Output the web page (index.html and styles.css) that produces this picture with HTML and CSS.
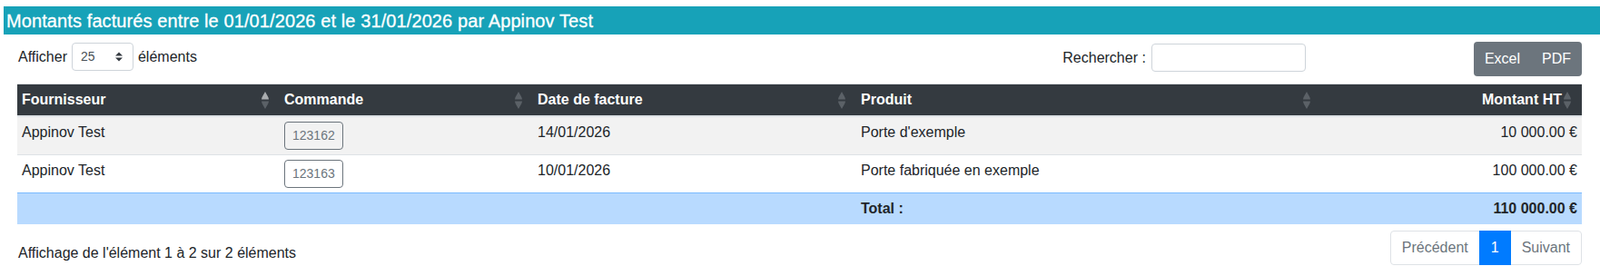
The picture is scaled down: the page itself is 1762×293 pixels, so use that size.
FILE: index.html
```html
<!DOCTYPE html>
<html lang="fr">
<head>
<meta charset="utf-8">
<title>Montants facturés</title>
<link rel="stylesheet" href="styles.css">
</head>
<body>
<h5 class="title">Montants facturés entre le 01/01/2026 et le 31/01/2026 par Appinov Test</h5>
<div class="content">
  <div class="toolbar">
    <div class="length">
      <span>Afficher</span>
      <div class="select"><span>25</span>
        <svg class="sel-arrows" width="8" height="11" viewBox="0 0 8 11"><path d="M0 4.5 L4 0.5 L8 4.5Z"/><path d="M0 6.5 L8 6.5 L4 10.5Z"/></svg>
      </div>
      <span>éléments</span>
    </div>
    <div class="search">
      <label for="q">Rechercher :</label>
      <input id="q" type="search">
    </div>
    <div class="buttons">
      <span class="btn">Excel</span>
      <span class="btn">PDF</span>
    </div>
  </div>

  <table class="grid">
    <colgroup>
      <col class="c1"><col class="c2"><col class="c3"><col class="c4"><col class="c5">
    </colgroup>
    <thead>
      <tr>
        <th><div class="th-in"><span>Fournisseur</span><svg class="sort active" width="8" height="19" viewBox="0 0 8 19"><path class="up" d="M4 0 C5.5 3 8 6 8 8.5 L0 8.5 C0 6 2.5 3 4 0Z"/><path class="down" d="M0 10.5 L8 10.5 C8 13 5.5 16 4 19 C2.5 16 0 13 0 10.5Z"/></svg></div></th>
        <th><div class="th-in"><span>Commande</span><svg class="sort" width="8" height="19" viewBox="0 0 8 19"><path class="up" d="M4 0 C5.5 3 8 6 8 8.5 L0 8.5 C0 6 2.5 3 4 0Z"/><path class="down" d="M0 10.5 L8 10.5 C8 13 5.5 16 4 19 C2.5 16 0 13 0 10.5Z"/></svg></div></th>
        <th><div class="th-in"><span>Date de facture</span><svg class="sort" width="8" height="19" viewBox="0 0 8 19"><path class="up" d="M4 0 C5.5 3 8 6 8 8.5 L0 8.5 C0 6 2.5 3 4 0Z"/><path class="down" d="M0 10.5 L8 10.5 C8 13 5.5 16 4 19 C2.5 16 0 13 0 10.5Z"/></svg></div></th>
        <th><div class="th-in"><span>Produit</span><svg class="sort" width="8" height="19" viewBox="0 0 8 19"><path class="up" d="M4 0 C5.5 3 8 6 8 8.5 L0 8.5 C0 6 2.5 3 4 0Z"/><path class="down" d="M0 10.5 L8 10.5 C8 13 5.5 16 4 19 C2.5 16 0 13 0 10.5Z"/></svg></div></th>
        <th><div class="th-in right"><span>Montant HT</span><svg class="sort" width="8" height="19" viewBox="0 0 8 19"><path class="up" d="M4 0 C5.5 3 8 6 8 8.5 L0 8.5 C0 6 2.5 3 4 0Z"/><path class="down" d="M0 10.5 L8 10.5 C8 13 5.5 16 4 19 C2.5 16 0 13 0 10.5Z"/></svg></div></th>
      </tr>
    </thead>
    <tbody>
      <tr class="odd">
        <td>Appinov Test</td>
        <td><span class="badge">123162</span></td>
        <td>14/01/2026</td>
        <td>Porte d'exemple</td>
        <td class="num">10 000.00 €</td>
      </tr>
      <tr class="even">
        <td>Appinov Test</td>
        <td><span class="badge">123163</span></td>
        <td>10/01/2026</td>
        <td>Porte fabriquée en exemple</td>
        <td class="num">100 000.00 €</td>
      </tr>
    </tbody>
    <tfoot>
      <tr class="total">
        <td></td>
        <td></td>
        <td></td>
        <td>Total :</td>
        <td class="num">110 000.00 €</td>
      </tr>
    </tfoot>
  </table>

  <div class="footer">
    <div class="info">Affichage de l'élément 1 à 2 sur 2 éléments</div>
    <div class="pagination">
      <span class="page first">Précédent</span>
      <span class="page active">1</span>
      <span class="page last">Suivant</span>
    </div>
  </div>
</div>
</body>
</html>
```

FILE: styles.css
```css
* { box-sizing: border-box; }

body {
  margin: 0;
  font-family: "Liberation Sans", Arial, sans-serif;
  font-size: 16px;
  line-height: 1.5;
  color: #212529;
  background: #fff;
}

.title {
  margin: 7px 0 0 4px;
  padding: 4px 3px 3px;
  background: #17a2b8;
  color: #fff;
  font-size: 20px;
  line-height: 24px;
  font-weight: normal;
  letter-spacing: 0.1px;
  -webkit-text-stroke: 0.3px #fff;
}

.content {
  padding: 8px 20px 0 19px;
}

.toolbar {
  display: flex;
  align-items: flex-start;
  height: 38px;
}

.length {
  display: flex;
  align-items: center;
  gap: 5px;
  margin-top: 1px;
  margin-left: 1px;
}

.select {
  width: 68px;
  height: 31px;
  display: flex;
  align-items: center;
  justify-content: space-between;
  padding: 0 11px 0 9px;
  border: 1px solid #ced4da;
  border-radius: 4px;
  font-size: 14px;
  color: #495057;
}

.sel-arrows { fill: #343a40; }

.search {
  margin-left: auto;
  margin-top: 2px;
  display: flex;
  align-items: center;
}

.search input {
  margin-left: 6px;
  width: 170px;
  height: 31px;
  border: 1px solid #ced4da;
  border-radius: 4px;
  padding: 4px 8px;
  font-family: inherit;
  font-size: 14px;
  outline: none;
}

.buttons {
  margin-left: 185px;
  display: flex;
  border-radius: 4px;
  overflow: hidden;
}

.btn {
  background: #6c757d;
  color: #fff;
  padding: 7px 12px;
  line-height: 24px;
  font-size: 16px;
}

.grid {
  margin-top: 8px;
  width: 100%;
  table-layout: fixed;
  border-collapse: separate;
  border-spacing: 0;
}

.c1 { width: 289px; }
.c2 { width: 279px; }
.c3 { width: 356px; }
.c4 { width: 512px; }
.c5 { width: 287px; }

.grid th {
  background: #343a40;
  color: #fff;
  font-weight: bold;
  text-align: left;
  padding: 5px;
  border-top: 1px solid #dee2e6;
  border-bottom: 2px solid #dee2e6;
}

.th-in {
  display: flex;
  align-items: center;
  justify-content: space-between;
  padding-right: 7px;
}

.th-in.right {
  justify-content: flex-end;
  gap: 2px;
}

.sort .up, .sort .down { fill: #5b6167; }
.sort.active .up { fill: #a9acaf; }
.sort.active .down { fill: #5b6167; }

.grid td {
  padding: 5px;
  vertical-align: top;
  white-space: nowrap;
}

.grid tr.odd td { background: #f2f2f2; }
.grid tr.even td { border-top: 1px solid #dee2e6; }

.grid tr.total td {
  background: #b8daff;
  border-top: 1px solid #7abaff;
  font-weight: bold;
}

.num { text-align: right; }

.badge {
  display: inline-block;
  vertical-align: top;
  border: 1px solid #6c757d;
  border-radius: 4px;
  padding: 4px 8px;
  font-size: 14px;
  line-height: 21px;
  color: #6c757d;
}

.footer {
  margin-top: 7px;
  display: flex;
  justify-content: space-between;
  align-items: flex-start;
}

.info {
  padding-top: 13px;
  padding-left: 1px;
}

.pagination {
  display: flex;
}

.page {
  padding: 8px 12px;
  line-height: 20px;
  border: 1px solid #dee2e6;
  color: #6c757d;
  margin-left: -1px;
  background: #fff;
}

.page.first {
  margin-left: 0;
  border-radius: 4px 0 0 4px;
}

.page.last {
  border-radius: 0 4px 4px 0;
}

.page.active {
  background: #007bff;
  border-color: #007bff;
  color: #fff;
  position: relative;
}
```
